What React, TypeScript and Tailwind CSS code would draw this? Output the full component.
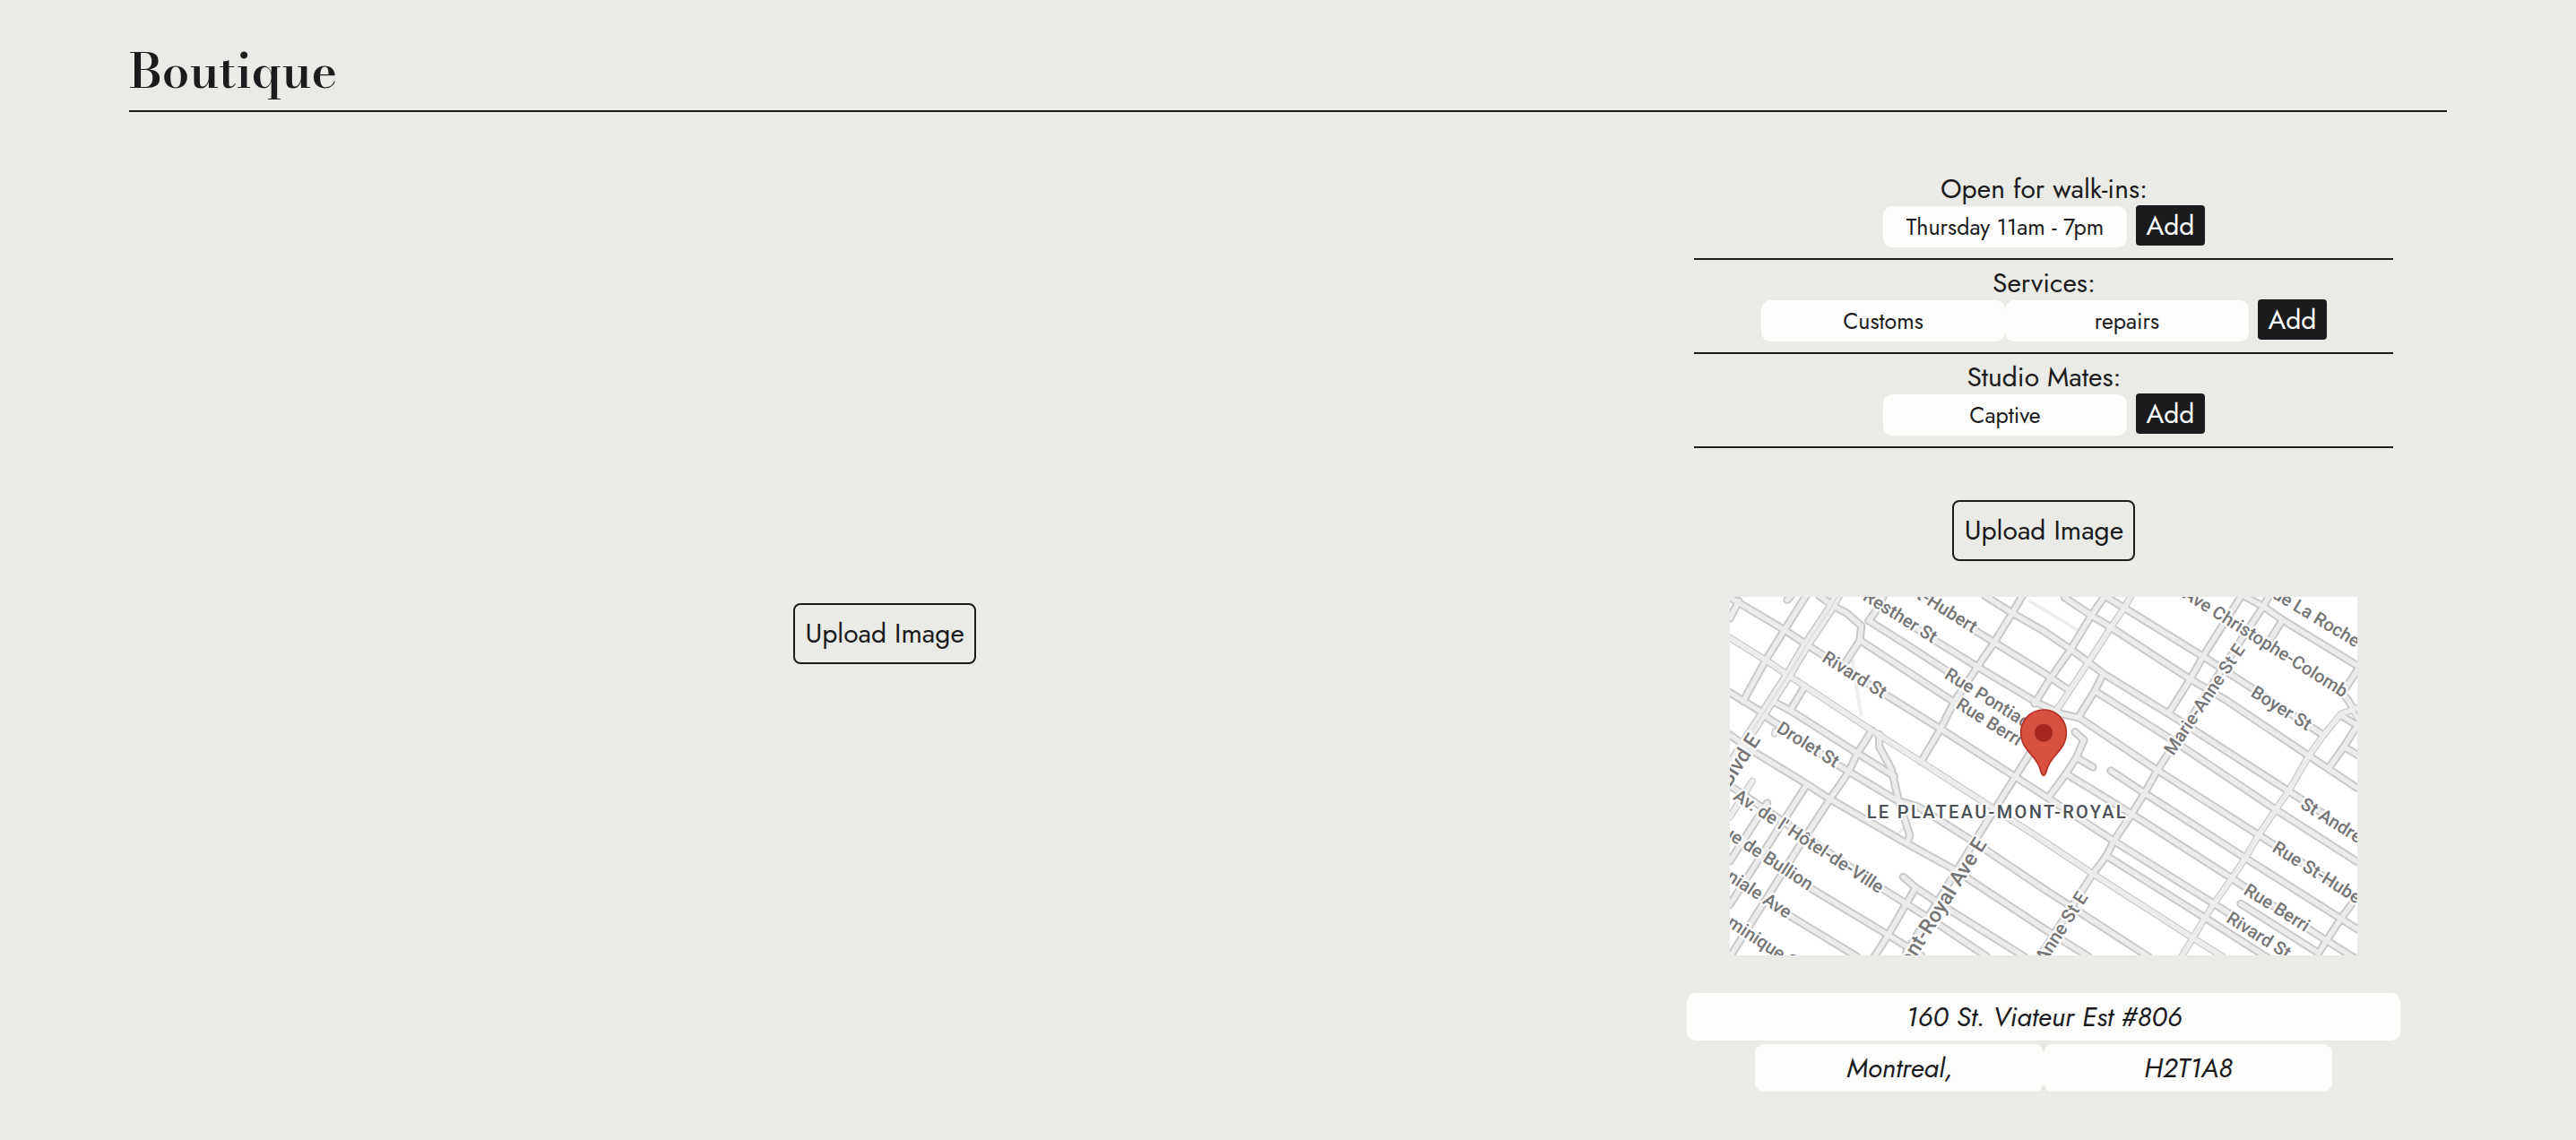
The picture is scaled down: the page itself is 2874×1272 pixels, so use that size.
import React from "react";

const SANS = "font-['Futura','Jost','Lato',sans-serif]";

type Road = { d: string; w?: number };

const roads: Road[] = [
  { d: "M0 2 185 112 260 162 520 327 705 442 955 602 1285 817 1620 1027 1700 1078" },
  { d: "M0 137 120 212 195 262 480 450 640 552 740 617 1020 797 1215 927 1550 1142 1650 1205", w: 24 },
  { d: "M0 320 105 385" },
  { d: "M145 350 205 382 425 522 550 600" },
  { d: "M115 397 360 562 560 682 630 702 820 822 1050 977 1400 1204" },
  { d: "M0 462 70 512 250 622 335 677 595 827 750 912 1050 1110 1200 1204" },
  { d: "M0 632 50 665 510 977 590 1027 700 1097 860 1204" },
  { d: "M580 937 620 972 710 1032 985 1204" },
  { d: "M200 930 270 975 530 1132 640 1200" },
  { d: "M150 1035 200 1067 425 1204" },
  { d: "M465 80 600 165 730 250" },
  { d: "M600 90 680 142 830 235 1030 355 1110 392 1170 405 1430 580 1770 797 2100 1008" },
  { d: "M780 88 885 152 1050 254 1130 309" },
  { d: "M855 -3 945 54 1050 114 1140 175 1198 217 1250 257 1470 392 1870 650 2000 735" },
  { d: "M1120 2 1210 62 1275 102 1540 275 1660 345 1938 532 2100 640" },
  { d: "M1255 -3 1320 37 1585 200 1750 307 1985 462" },
  { d: "M1225 317 1470 472 1827 712 2100 887" },
  { d: "M1720 -3 1785 32 1850 77 2100 230" },
  { d: "M1125 592 1345 727 1680 942 1740 982 1960 1127 2100 1215" },
  { d: "M1275 582 1388 657 1725 874 2045 1077 2100 1112" },
  { d: "M1260 867 1590 1074 1800 1208" },
  { d: "M1710 1027 1970 1192" },
  { d: "M30 14 0 72" },
  { d: "M262 -15 185 107 120 212 52 335 45 350" },
  { d: "M300 -3 345 30 392 55 440 97 435 145 390 215" },
  { d: "M435 145 590 247 750 352 790 378" },
  { d: "M465 80 490 45 515 -5" },
  { d: "M250 300 205 375" },
  { d: "M205 -4 192 10" },
  { d: "M150 448 148 460", w: 20 },
  { d: "M475 447 425 527 395 590 335 677 240 822 0 1205" },
  { d: "M500 460 500 502 540 575 565 682 602 797 595 822" },
  { d: "M255 632 0 1030" },
  { d: "M75 617 0 737", w: 24 },
  { d: "M125 690 0 885" },
  { d: "M980 -5 945 54 885 152 830 232 750 352 705 442 640 552" },
  { d: "M1255 -3 1210 62 1140 177 1070 277 1020 357" },
  { d: "M1345 -8 1320 37 1275 102 1198 222 1095 377", w: 24 },
  { d: "M1250 257 1220 317 1170 397" },
  { d: "M1715 -8 1585 197 1540 277 1470 387" },
  { d: "M1808 -8 1785 32 1660 222 1430 582 1388 657 1345 727 1285 817 1260 867 1215 927 1020 1230" },
  { d: "M1850 77 1795 165" },
  { d: "M1010 515 955 602 840 785 590 1190" },
  { d: "M620 977 590 1027 530 1132 480 1210" },
  { d: "M2110 230 2050 322 2070 347 2085 372" },
  { d: "M2110 368 2045 392 1985 465 1938 532 1870 650 1827 712 1770 797 1725 874 1680 942 1620 1027 1590 1074 1550 1142 1508 1210", w: 24 },
  { d: "M2045 397 2110 436" },
  { d: "M2110 415 2055 502 2005 572" },
  { d: "M2080 372 2110 425", w: 20 },
  { d: "M2055 502 2110 534" },
  { d: "M1155 452 1185 479 1160 537 1125 592 1070 667" },
  { d: "M1160 537 1215 570" },
  { d: "M2110 990 2045 1077 1970 1192" },
];

const lanes = ["M1000 12 1165 112", "M408 202 440 400", "M560 797 582 775"];

type Label = { x: number; y: number; a: number; t: string; end?: boolean; s?: number };

const labels: Label[] = [
  { x: 305, y: 214, a: 32, t: "Rivard St" },
  { x: 153, y: 450, a: 32, t: "Drolet St" },
  { x: 715, y: 270, a: 32, t: "Rue Pontiac" },
  { x: 753, y: 370, a: 32, t: "Rue Berri" },
  { x: 678, y: 156, a: 32, t: "Resther St", end: true },
  { x: 812, y: 122, a: 32, t: "Rue St-Hubert", end: true },
  { x: 104, y: 478, a: -57, t: "Blvd E", end: true, s: 70 },
  { x: 8, y: 676, a: 33, t: "Av. de l' Hôtel-de-Ville" },
  { x: 262, y: 984, a: 33, t: "Rue de Bullion", end: true },
  { x: 190, y: 1078, a: 33, t: "Coloniale Ave", end: true },
  { x: -74, y: 1060, a: 33, t: "Dominique St" },
  { x: 862, y: 826, a: -58, t: "Mont-Royal Ave E", end: true, s: 70 },
  { x: 1484, y: 534, a: -56, t: "Marie-Anne St E", s: 60 },
  { x: 1200, y: 1005, a: -57, t: "Marie-Anne St E", end: true, s: 62 },
  { x: 1716, y: 992, a: 32, t: "Rue Berri" },
  { x: 1658, y: 1086, a: 32, t: "Rivard St" },
  { x: 1812, y: 850, a: 32, t: "Rue St-Hubert" },
  { x: 1906, y: 704, a: 32, t: "St Andre St" },
  { x: 1740, y: 330, a: 32, t: "Boyer St" },
  { x: 2052, y: 338, a: 32, t: "Ave Christophe-Colomb", end: true },
  { x: 2094, y: 170, a: 31, t: "Rue de La Roche", end: true },
];

function StreetMap() {
  return (
    <svg
      role="img"
      aria-label="Map of Le Plateau-Mont-Royal"
      viewBox="0 0 2100 1200"
      className="block w-[700px] max-w-full bg-white font-['Roboto',sans-serif] font-medium"
    >
      <g fill="none" stroke="#eeeeee" strokeWidth="12">
        {lanes.map((d) => (
          <path key={d} d={d} />
        ))}
      </g>
      <g fill="none" stroke="#c9c9c9" strokeLinejoin="round" strokeLinecap="round">
        {roads.map((r, i) => (
          <path key={i} d={r.d} strokeWidth={r.w ?? 28} />
        ))}
        <path d="M363 -10 335 42 255 162 195 262 75 447 0 565" strokeWidth="37" />
      </g>
      <g fill="none" stroke="#ececec" strokeLinejoin="round" strokeLinecap="round">
        {roads.map((r, i) => (
          <path key={i} d={r.d} strokeWidth={r.w === undefined ? 16 : r.w - 7} />
        ))}
        <path d="M363 -10 335 42 255 162 195 262 75 447 0 565" strokeWidth="28" />
      </g>
      <path d="M363 -10 335 42 255 162 195 262 75 447" fill="none" stroke="#d2d2d2" strokeWidth="3" />
      <g fill="#757575" stroke="#ffffff" strokeOpacity="0.85" strokeWidth="14" strokeLinejoin="round" paintOrder="stroke">
        {labels.map((l, i) => (
          <text
            key={i}
            transform={`translate(${l.x} ${l.y}) rotate(${l.a})`}
            fontSize={l.s ?? 60}
            textAnchor={l.end ? "end" : "start"}
          >
            {l.t}
          </text>
        ))}
      </g>
      <text
        x="895"
        y="740"
        textAnchor="middle"
        fontSize="60"
        letterSpacing="7"
        fill="#4b5156"
        stroke="#ffffff"
        strokeOpacity="0.85"
        strokeWidth="14"
        strokeLinejoin="round"
        paintOrder="stroke"
      >
        LE PLATEAU-MONT-ROYAL
      </text>
      <path
        d="M1050 598C1042 598 1041 580 1035 567 1018 526 974 510 974 454A76 76 0 0 1 1126 454C1126 510 1082 526 1065 567 1059 580 1058 598 1050 598Z"
        fill="#d85040"
        stroke="#b62f26"
        strokeWidth="5"
      />
      <circle cx="1050" cy="455" r="30" fill="#a3271f" />
    </svg>
  );
}

function EditableList({ title, values }: { title: string; values: string[] }) {
  return (
    <section className="border-b-2 border-[#1b1b1d] pt-1 pb-3">
      <h2 className="h-10 text-center text-[30px] leading-11">{title}</h2>
      <div className="flex justify-center">
        {values.map((v) => (
          <input
            key={v}
            type="text"
            aria-label={title}
            defaultValue={v}
            className="mt-px h-[46px] w-[272px] rounded-[10px] bg-[#fdfefc] px-2 text-center text-[25px]"
          />
        ))}
        <button
          type="button"
          className="ml-[10px] h-[45px] w-[77px] rounded bg-[#1b1b1d] text-center text-[30px] leading-10 text-white"
        >
          Add
        </button>
      </div>
    </section>
  );
}

function UploadButton() {
  return (
    <button
      type="button"
      className="h-[68px] w-[204px] rounded-lg border-2 border-[#1b1b1d] text-[30px] leading-10 whitespace-nowrap"
    >
      Upload Image
    </button>
  );
}

function AddressField({ label, value, className }: { label: string; value: string; className: string }) {
  return (
    <input
      type="text"
      aria-label={label}
      defaultValue={value}
      className={`h-[53px] rounded-[10px] bg-[#fdfefc] px-2 text-center text-[30px] italic ${className}`}
    />
  );
}

export default function App() {
  return (
    <main className={`min-h-screen bg-[#eaebe6] px-[5%] text-[#1b1b1d] ${SANS}`}>
      <header className="border-b-2 border-[#1b1b1d] pt-[37px]">
        <h1 className="h-[86px] font-['Bodoni_Moda','Liberation_Serif',serif] text-[54px] leading-[84px] font-semibold">
          Boutique
        </h1>
      </header>
      <div className="grid grid-cols-[15fr_8fr] items-center pt-[60px]">
        <div className="flex justify-center">
          <UploadButton />
        </div>
        <div className="flex flex-col items-center pb-[11px]">
          <div className="w-[780px] max-w-full">
            <EditableList title="Open for walk-ins:" values={["Thursday 11am - 7pm"]} />
            <EditableList title="Services:" values={["Customs", "repairs"]} />
            <EditableList title="Studio Mates:" values={["Captive"]} />
          </div>
          <div className="flex w-full flex-col items-center gap-10 pt-[58px]">
            <UploadButton />
            <StreetMap />
          </div>
          <form className="flex w-full flex-col items-center gap-1 pt-[42px]">
            <AddressField label="Street" value="160 St. Viateur Est #806" className="w-[796px] max-w-full" />
            <div className="flex">
              <AddressField label="City" value="Montreal," className="w-[322px]" />
              <AddressField label="Postal code" value="H2T1A8" className="w-[322px]" />
            </div>
          </form>
        </div>
      </div>
    </main>
  );
}
